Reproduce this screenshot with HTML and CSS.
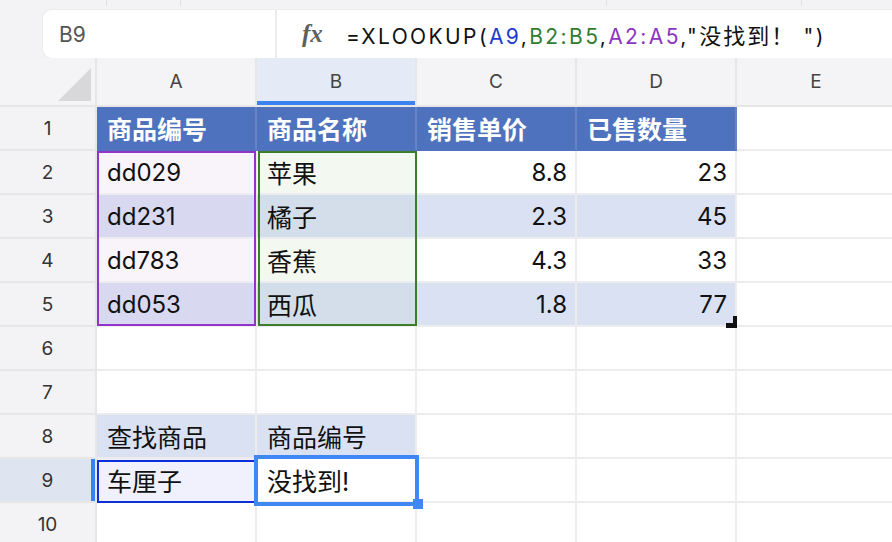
FILE: index.html
```html
<!DOCTYPE html>
<html lang="zh-CN">
<head>
<meta charset="utf-8">
<title>XLOOKUP</title>
<link rel="stylesheet" href="styles.css">
</head>
<body>
<div class="top">
  <span class="seg s1"></span><span class="seg s2"></span><span class="seg s3"></span><span class="seg s4"></span>
</div>
<div class="fbar">
  <div class="namebox">B9</div>
  <div class="fx">fx</div>
  <div class="formula">=XLOOKUP(<span class="rb">A9</span>,<span class="rg">B2:B5</span>,<span class="rp">A2:A5</span>,"<span class="fzh">没找到！</span> ")</div>
</div>
<div class="sheet">
  <div class="corner"><svg width="33" height="33" viewBox="0 0 33 33"><polygon points="33,0 33,33 0,33" fill="#d8d8da"/></svg></div>
  <div class="ch">A</div><div class="ch csel">B</div><div class="ch">C</div><div class="ch">D</div><div class="ch">E</div>

  <div class="rh">1</div>
  <div class="c hd zh">商品编号</div><div class="c hd zh">商品名称</div><div class="c hd zh">销售单价</div><div class="c hd zh">已售数量</div><div class="c"></div>

  <div class="rh">2</div>
  <div class="c pw">dd029</div><div class="c gw zh">苹果</div><div class="c num">8.8</div><div class="c num">23</div><div class="c"></div>

  <div class="rh">3</div>
  <div class="c pb">dd231</div><div class="c gb zh">橘子</div><div class="c num band">2.3</div><div class="c num band">45</div><div class="c"></div>

  <div class="rh">4</div>
  <div class="c pw">dd783</div><div class="c gw zh">香蕉</div><div class="c num">4.3</div><div class="c num">33</div><div class="c"></div>

  <div class="rh">5</div>
  <div class="c pb">dd053</div><div class="c gb zh">西瓜</div><div class="c num band">1.8</div><div class="c num band">77</div><div class="c"></div>

  <div class="rh">6</div>
  <div class="c"></div><div class="c"></div><div class="c"></div><div class="c"></div><div class="c"></div>

  <div class="rh">7</div>
  <div class="c"></div><div class="c"></div><div class="c"></div><div class="c"></div><div class="c"></div>

  <div class="rh">8</div>
  <div class="c band zh">查找商品</div><div class="c band zh">商品编号</div><div class="c"></div><div class="c"></div><div class="c"></div>

  <div class="rh rsel">9</div>
  <div class="c a9 zh">车厘子</div><div class="c zh">没找到!</div><div class="c"></div><div class="c"></div><div class="c"></div>

  <div class="rh">10</div>
  <div class="c"></div><div class="c"></div><div class="c"></div><div class="c"></div><div class="c"></div>

  <div class="ov rng-a"></div>
  <div class="ov rng-b"></div>
  <div class="ov a9box"></div>
  <div class="ov b9box"></div>
  <div class="ov handle"></div>
  <div class="ov dmark"></div>
</div>
</body>
</html>
```

FILE: styles.css
```css
* { box-sizing: border-box; }
html, body { margin: 0; padding: 0; overflow: hidden; }
body {
  width: 892px;
  height: 542px;
  background: #f3f3f5;
  font-family: Inter, "Noto Sans CJK SC", sans-serif;
  color: #111;
}
.top { height: 10px; display: flex; }
.top .seg { height: 6px; border-right: 1px solid #e0e0e3; }
.s1 { width: 107px; }
.s2 { width: 74px; }
.s3 { width: 426px; }
.s4 { width: 195px; }

.fbar {
  margin-left: 43px;
  height: 48px;
  background: #fff;
  border-radius: 9px 0 0 9px;
  display: flex;
  align-items: center;
  box-shadow: 0 0 0 1px #ececee;
}
.namebox {
  width: 234px;
  height: 100%;
  border-right: 2px solid #ececee;
  padding-left: 16px;
  display: flex;
  align-items: center;
  font-size: 21px;
  color: #555;
}
.fx {
  width: 69px;
  padding-left: 25px;
  font-family: "Liberation Serif", serif;
  font-style: italic;
  font-weight: bold;
  font-size: 25px;
  color: #5f5f5f;
}
.formula {
  font-size: 21px;
  letter-spacing: 2.4px;
  color: #111;
  white-space: nowrap;
}
.formula .fzh { font-size: 22px; letter-spacing: 2px; }
.rb { color: #1b3bd1; }
.rg { color: #2f7d32; }
.rp { color: #8b36c1; }

.sheet {
  position: relative;
  display: grid;
  grid-template-columns: 97px repeat(5, 160px);
  grid-template-rows: 49px repeat(10, 44px);
}
.corner {
  background: #f4f4f6;
  border-right: 2px solid #e6e6e8;
  border-bottom: 2px solid #e6e6e8;
  padding: 10px 0 0 58px;
}
.corner svg { display: block; }
.ch {
  background: #f4f4f6;
  border-right: 2px solid #e6e6e8;
  border-bottom: 2px solid #e6e6e8;
  display: flex;
  align-items: center;
  justify-content: center;
  font-size: 19px;
  color: #444;
}
.ch.csel { background: #e4ebf7; box-shadow: inset 0 -4px 0 #3b82f0; }
.rh {
  background: #f3f3f5;
  border-right: 2px solid #e6e6e8;
  border-bottom: 2px solid #e6e6e8;
  display: flex;
  align-items: center;
  justify-content: center;
  font-size: 19px;
  color: #333;
}
.rh.rsel { background: #dfe5f0; box-shadow: inset -4px 0 0 #3b82f0; }

.c {
  background: #fff;
  border-right: 2px solid #ececee;
  border-bottom: 2px solid #ececee;
  display: flex;
  align-items: center;
  padding: 0 10px;
  font-size: 24px;
  white-space: nowrap;
}
.c.zh { font-size: 25px; }
.c.num { justify-content: flex-end; padding-right: 8px; }
.c.hd { background: #4e72bd; color: #fff; font-weight: bold; border-right-color: #6584c6; border-bottom-color: #4e72bd; }
.pw { background: #f8f4fa; }
.pb { background: #d9d8f1; }
.gw { background: #f3f8f1; }
.gb { background: #d3deea; }
.c.band { background: #dae1f3; }
.a9 { background: #f0f1fc; }

.ov { position: absolute; pointer-events: none; }
.rng-a { left: 97px; top: 93px; width: 159px; height: 175px; border: 2px solid #9234c8; }
.rng-b { left: 258px; top: 93px; width: 159px; height: 175px; border: 2px solid #3b7d2b; }
.a9box { left: 97px; top: 402px; width: 159px; height: 43px; border: 2px solid #0d2fd6; }
.b9box { left: 254px; top: 397px; width: 165px; height: 51px; border: 4px solid #3f87f5; }
.handle { left: 413px; top: 441px; width: 10px; height: 10px; background: #3f87f5; }
.dmark { left: 726px; top: 258px; width: 11px; height: 12px; border-right: 4px solid #111; border-bottom: 5px solid #111; }
```
